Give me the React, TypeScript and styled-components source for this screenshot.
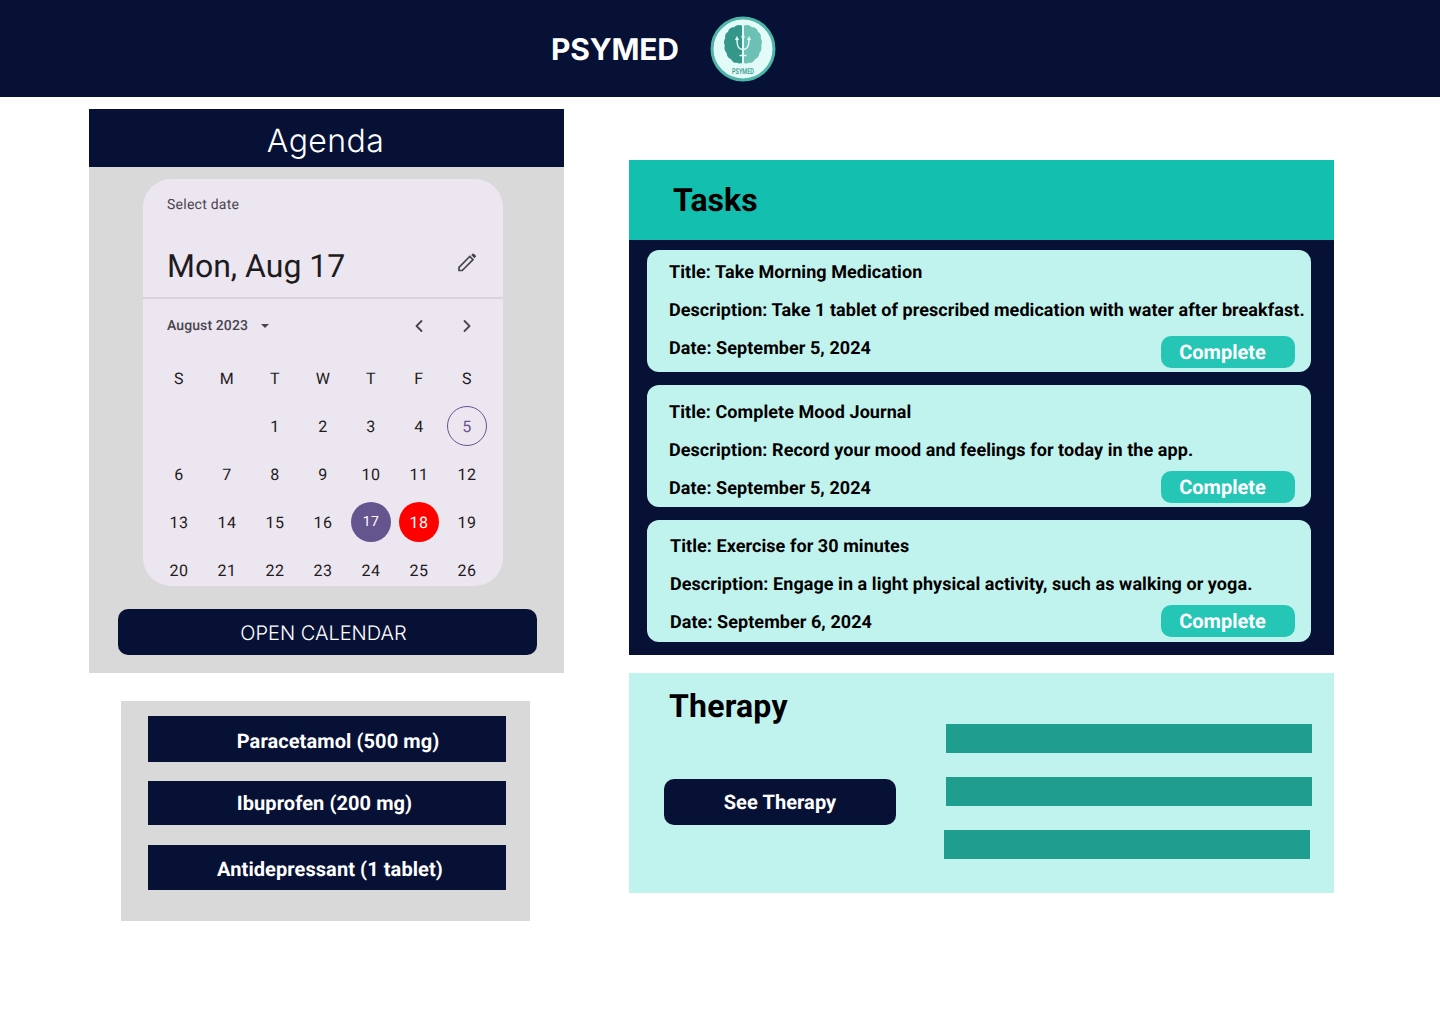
import styled, { createGlobalStyle } from 'styled-components';
import { ChevronLeft, ChevronRight } from 'lucide-react';

const NAVY = '#071135';
const MINT = '#C1F3EE';

const GlobalStyle = createGlobalStyle`
	html, body {
		margin: 0;
		padding: 0;
		background: #fff;
		font-family: 'Roboto', sans-serif;
		text-rendering: geometricPrecision;
	}
	* {
		box-sizing: border-box;
	}
	button {
		text-rendering: geometricPrecision;
	}
`;
const Page = styled.div`
	width: 1440px;
	height: 1024px;
	overflow: hidden;
`;
const Header = styled.header`
	height: 97px;
	background: ${NAVY};
	display: flex;
	align-items: center;
	padding-left: 551px;
`;
const Brand = styled.h1`
	margin: 2px 0 0;
	width: 159px;
	color: #fff;
	font: 700 30px 'Inter', sans-serif;
	letter-spacing: -0.2px;
`;
const Columns = styled.main`
	display: flex;
	align-items: flex-start;
	padding-left: 89px;
	gap: 65px;
`;
const LeftColumn = styled.section`
	width: 475px;
	padding-top: 12px;
`;
const RightColumn = styled.section`
	width: 705px;
	padding-top: 63px;
`;
const AgendaTitle = styled.h2`
	margin: 0;
	height: 58px;
	padding-right: 2px;
	background: ${NAVY};
	color: #fff;
	font: 300 32px/64px 'Inter', sans-serif;
	letter-spacing: 0.4px;
	text-align: center;
`;
const AgendaBody = styled.div`
	height: 506px;
	background: #d9d9d9;
	padding: 12px 0 0 29px;
`;
const Picker = styled.div`
	width: 360px;
	height: 407px;
	margin-left: 25px;
	background: #ece6f0;
	border-radius: 28px;
	overflow: hidden;
	color: #1d1b20;
`;
const PickerTop = styled.div`
	height: 120px;
	padding: 16px 24px 0;
	border-bottom: 2px solid #d9d3df;
`;
const SelectLabel = styled.div`
	color: #49454f;
	font-size: 14px;
	line-height: 20px;
	letter-spacing: 0.25px;
`;
const DateRow = styled.div`
	margin-top: 31px;
	display: flex;
	align-items: center;
	justify-content: space-between;
`;
const DateValue = styled.div`
	font-size: 32px;
	line-height: 40px;
`;
const PencilWrap = styled.span`
	display: flex;
	margin-top: -8px;
`;
const MonthRow = styled.div`
	height: 55px;
	display: flex;
	align-items: center;
	padding: 0 26px 1px 24px;
	color: #49454f;
`;
const MonthLabel = styled.span`
	font-size: 14px;
	font-weight: 500;
	letter-spacing: 0.1px;
	color: #49454f;
`;
const Caret = styled.span`
	width: 0;
	height: 0;
	margin-left: 13px;
	border-left: 4px solid transparent;
	border-right: 4px solid transparent;
	border-top: 4px solid #49454f;
`;
const MonthNav = styled.div`
	margin-left: auto;
	display: flex;
	gap: 28px;
`;
const DayGrid = styled.div`
	display: grid;
	grid-template-columns: repeat(7, 48px);
	grid-auto-rows: 48px;
	padding-left: 12px;
`;
const Cell = styled.div`
	display: flex;
	align-items: center;
	justify-content: center;
	font-size: 16px;
	letter-spacing: 0.5px;
`;
const Day = styled.span<{ $tone?: 'outline' | 'selected' | 'alert' }>`
	width: 40px;
	height: 40px;
	border-radius: 50%;
	display: flex;
	align-items: center;
	justify-content: center;
	font-size: ${(p) => (p.$tone === 'selected' ? '14px' : '16px')};
	color: ${(p) => (p.$tone === 'outline' ? '#65558f' : p.$tone ? '#fff' : '#1d1b20')};
	border: ${(p) => (p.$tone === 'outline' ? '1px solid #65558f' : 'none')};
	background: ${(p) => (p.$tone === 'selected' ? '#65558f' : p.$tone === 'alert' ? '#ff0000' : 'transparent')};
`;
const OpenCalendar = styled.button`
	display: block;
	width: 419px;
	height: 46px;
	margin-top: 23px;
	padding: 2px 8px 0 0;
	border: 0;
	border-radius: 10px;
	background: ${NAVY};
	color: #fff;
	font: 300 20px 'Inter', sans-serif;
`;
const MedsPanel = styled.div`
	width: 409px;
	height: 220px;
	margin: 28px 0 0 32px;
	padding: 15px 24px 0 27px;
	background: #d9d9d9;
	display: flex;
	flex-direction: column;
`;
const MedRow = styled.div<{ $height: number; $gap: number; $left?: number; $right?: number; $top?: number }>`
	height: ${(p) => p.$height}px;
	margin-bottom: ${(p) => p.$gap}px;
	padding: ${(p) => p.$top ?? 0}px ${(p) => p.$right ?? 0}px 0 ${(p) => p.$left ?? 0}px;
	background: ${NAVY};
	color: #fff;
	display: flex;
	align-items: center;
	justify-content: center;
	font-size: 20px;
	font-weight: 700;
	letter-spacing: 0.08px;
`;
const TasksTitle = styled.h2`
	margin: 0;
	height: 80px;
	padding-left: 44px;
	background: #13bfae;
	color: #000;
	font: 700 32px/80px 'Roboto', sans-serif;
`;
const TasksBody = styled.div`
	height: 415px;
	padding: 10px 23px 0 18px;
	background: ${NAVY};
	display: flex;
	flex-direction: column;
	gap: 13px;
`;
const TaskCard = styled.article<{ $inset: number; $top: number }>`
	height: 122px;
	padding: ${(p) => p.$top}px 0 0 ${(p) => p.$inset}px;
	background: ${MINT};
	border-radius: 12px;
	color: #000;
	position: relative;
`;
const TaskLine = styled.p`
	margin: 0;
	height: 38px;
	font-size: 18px;
	font-weight: 700;
	line-height: 21px;
	letter-spacing: 0.065px;
	padding-top: 12px;
	white-space: nowrap;
`;
const CompleteButton = styled.button<{ $bottom: number }>`
	position: absolute;
	right: 16px;
	bottom: ${(p) => p.$bottom}px;
	width: 134px;
	height: 32px;
	padding: 0 11px 0 0;
	border: 0;
	border-radius: 10px;
	background: #26c6b7;
	color: #fff;
	font: 700 20px 'Roboto', sans-serif;
	text-align: center;
`;
const TherapyPanel = styled.div`
	height: 220px;
	margin-top: 18px;
	padding-left: 35px;
	background: ${MINT};
	display: flex;
`;
const TherapyLeft = styled.div`
	width: 282px;
`;
const TherapyTitle = styled.h2`
	margin: 0;
	padding: 14px 0 0 5px;
	color: #000;
	font: 700 32px/38px 'Roboto', sans-serif;
	letter-spacing: 0.2px;
`;
const SeeTherapy = styled.button`
	display: block;
	width: 232px;
	height: 46px;
	margin-top: 54px;
	border: 0;
	border-radius: 10px;
	background: ${NAVY};
	color: #fff;
	font: 700 20px 'Roboto', sans-serif;
	letter-spacing: 0.08px;
`;
const TherapyBars = styled.div`
	padding-top: 51px;
	display: flex;
	flex-direction: column;
	gap: 24px;
`;
const TherapyBar = styled.div<{ $pull?: boolean }>`
	width: 366px;
	height: 29px;
	margin-left: ${(p) => (p.$pull ? '-2px' : '0')};
	background: #1f9e8f;
`;

const weekdays = ['S', 'M', 'T', 'W', 'T', 'F', 'S'];
const days: (number | null)[] = [null, null, ...Array.from({ length: 26 }, (_, i) => i + 1)];
const toneFor = (d: number | null) => (d === 5 ? 'outline' : d === 17 ? 'selected' : d === 18 ? 'alert' : undefined);

const tasks = [
	{
		title: 'Take Morning Medication',
		description: 'Take 1 tablet of prescribed medication with water after breakfast.',
		date: 'September 5, 2024',
		inset: 22,
		top: 0,
		bottom: 4
	},
	{
		title: 'Complete Mood Journal',
		description: 'Record your mood and feelings for today in the app.',
		date: 'September 5, 2024',
		inset: 22,
		top: 5,
		bottom: 4
	},
	{
		title: 'Exercise for 30 minutes',
		description: 'Engage in a light physical activity, such as walking or yoga.',
		date: 'September 6, 2024',
		inset: 23,
		top: 4,
		bottom: 5
	}
];

function Logo() {
	return (
		<svg width="66" height="66" viewBox="0 0 66 66">
			<circle cx="33" cy="33" r="31" fill="#e3fbf8" stroke="#4fb5a8" strokeWidth="3" />
			<g transform="translate(0 -0.4) scale(1 1.1)">
				<path
					d="M32 9c-3.4-1.2-6.4-.4-8 1.6-3-.2-5.2 1.4-6 4-2.4 1.2-3.4 3.6-2.8 6-1.4 1.8-1.6 4.4-.4 6.6-.8 2.4-.2 5 1.8 6.8.2 2.8 1.8 4.8 4.4 5.6 1.4 2.6 3.8 3.8 6.4 3.2.8.8 3 1 4.6.4z"
					fill="#35968a"
				/>
				<path
					d="M34 9c3.4-1.2 6.4-.4 8 1.6 3-.2 5.2 1.4 6 4 2.4 1.2 3.4 3.6 2.8 6 1.4 1.8 1.6 4.4.4 6.6.8 2.4.2 5-1.8 6.8-.2 2.8-1.8 4.8-4.4 5.6-1.4 2.6-3.8 3.8-6.4 3.2-.8.8-3 1-4.6.4z"
					fill="#6cc0b4"
				/>
			</g>
			<path
				d="M33 19v25M29.5 39.5h7M27 22.5c0 7.5 1.2 11 6 11s6-3.5 6-11M25.6 24l1.4-2.6 1.4 2.6M37.6 24l1.4-2.6 1.4 2.6M31.6 21.5l1.4-2.6 1.4 2.6"
				fill="none"
				stroke="#e3fbf8"
				strokeWidth="1.4"
			/>
			<text
				x="33"
				y="58"
				textAnchor="middle"
				fontFamily="Roboto, sans-serif"
				fontSize="8"
				fontWeight="500"
				textLength="22"
				lengthAdjust="spacingAndGlyphs"
				fill="#35968a"
			>
				PSYMED
			</text>
		</svg>
	);
}

function PencilIcon() {
	return (
		<svg width="24" height="24" viewBox="0 0 24 24">
			<path d="M4 20.5v-3.2L14.8 6.5l3.2 3.2L7.2 20.5z" fill="none" stroke="#49454f" strokeWidth="1.7" />
			<path d="M16.2 5.1l1.3-1.3a1 1 0 0 1 1.4 0l1.8 1.8a1 1 0 0 1 0 1.4l-1.3 1.3z" fill="#49454f" />
		</svg>
	);
}

export default function App() {
	return (
		<Page>
			<GlobalStyle />
			<Header>
				<Brand>PSYMED</Brand>
				<Logo />
			</Header>
			<Columns>
				<LeftColumn>
					<AgendaTitle>Agenda</AgendaTitle>
					<AgendaBody>
						<Picker>
							<PickerTop>
								<SelectLabel>Select date</SelectLabel>
								<DateRow>
									<DateValue>Mon, Aug 17</DateValue>
									<PencilWrap>
										<PencilIcon />
									</PencilWrap>
								</DateRow>
							</PickerTop>
							<MonthRow>
								<MonthLabel>August 2023</MonthLabel>
								<Caret />
								<MonthNav>
									<ChevronLeft size={20} strokeWidth={2.2} />
									<ChevronRight size={20} strokeWidth={2.2} />
								</MonthNav>
							</MonthRow>
							<DayGrid>
								{weekdays.map((d, i) => (
									<Cell key={i}>{d}</Cell>
								))}
								{days.map((d, i) => (
									<Cell key={i}>{d && <Day $tone={toneFor(d)}>{d}</Day>}</Cell>
								))}
							</DayGrid>
						</Picker>
						<OpenCalendar>OPEN CALENDAR</OpenCalendar>
					</AgendaBody>
					<MedsPanel>
						<MedRow $height={46} $gap={19} $left={22} $top={4}>Paracetamol (500 mg)</MedRow>
						<MedRow $height={44} $gap={20} $right={5}>Ibuprofen (200 mg)</MedRow>
						<MedRow $height={45} $gap={0} $left={6} $top={2}>Antidepressant (1 tablet)</MedRow>
					</MedsPanel>
				</LeftColumn>
				<RightColumn>
					<TasksTitle>Tasks</TasksTitle>
					<TasksBody>
						{tasks.map((t) => (
							<TaskCard key={t.title} $inset={t.inset} $top={t.top}>
								<TaskLine>Title: {t.title}</TaskLine>
								<TaskLine>Description: {t.description}</TaskLine>
								<TaskLine>Date: {t.date}</TaskLine>
								<CompleteButton $bottom={t.bottom}>Complete</CompleteButton>
							</TaskCard>
						))}
					</TasksBody>
					<TherapyPanel>
						<TherapyLeft>
							<TherapyTitle>Therapy</TherapyTitle>
							<SeeTherapy>See Therapy</SeeTherapy>
						</TherapyLeft>
						<TherapyBars>
							<TherapyBar />
							<TherapyBar />
							<TherapyBar $pull />
						</TherapyBars>
					</TherapyPanel>
				</RightColumn>
			</Columns>
		</Page>
	);
}
